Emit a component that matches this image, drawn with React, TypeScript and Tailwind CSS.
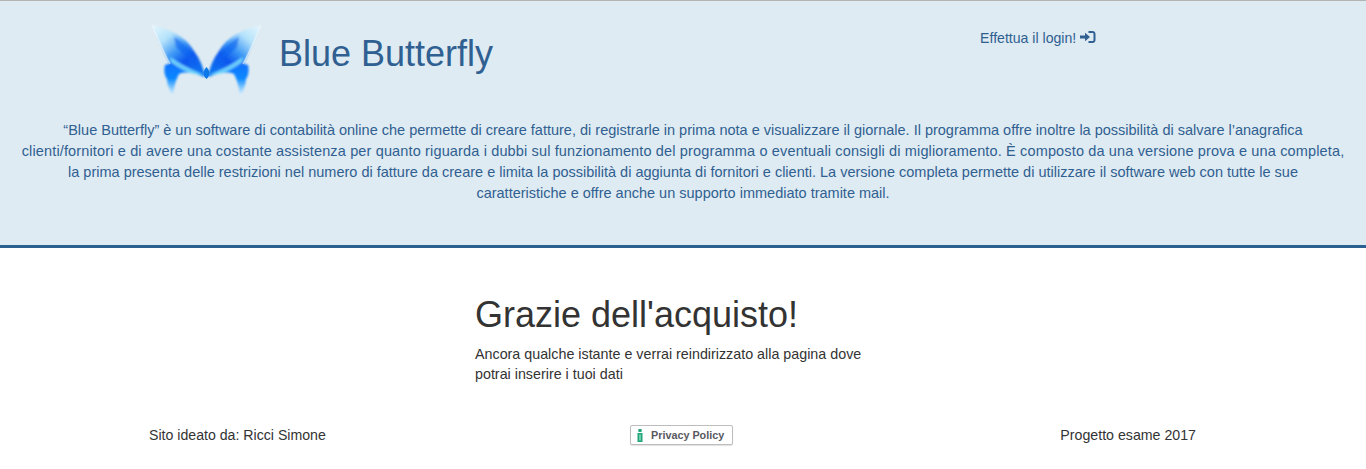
import React from 'react'

function ButterflyLogo() {
  return (
    <svg width="114" height="76" viewBox="0 0 114 76" className="shrink-0">
      <defs>
        <linearGradient id="wingL" x1="0" y1="0" x2="0.85" y2="0.95">
          <stop offset="0" stopColor="#e8f8ff" />
          <stop offset="0.3" stopColor="#b4e2fb" />
          <stop offset="0.55" stopColor="#3a96f5" />
          <stop offset="0.75" stopColor="#0a55ee" />
          <stop offset="1" stopColor="#0a78f0" />
        </linearGradient>
        <linearGradient id="wingR" x1="1" y1="0" x2="0.15" y2="0.95">
          <stop offset="0" stopColor="#e8f8ff" />
          <stop offset="0.3" stopColor="#b4e2fb" />
          <stop offset="0.55" stopColor="#3a96f5" />
          <stop offset="0.75" stopColor="#0a55ee" />
          <stop offset="1" stopColor="#0a78f0" />
        </linearGradient>
        <linearGradient id="lower" x1="0" y1="0" x2="0" y2="1">
          <stop offset="0" stopColor="#0a72ff" />
          <stop offset="0.45" stopColor="#0a88ff" />
          <stop offset="0.75" stopColor="#8fd0ff" />
          <stop offset="1" stopColor="#f0faff" />
        </linearGradient>
        <filter id="soft" x="-10%" y="-10%" width="120%" height="120%">
          <feGaussianBlur stdDeviation="1.1" />
        </filter>
      </defs>
      <g filter="url(#soft)">
        <path d="M15 42 C28 37 44 44 55 52 L54 54 C46 50 36 48 29 51 C25 58 24 66 23 74 C20 68 17 62 17 56 C14 52 14 46 15 42 Z" fill="url(#lower)" />
        <path d="M98 42 C85 37 69 44 58 52 L59 54 C67 50 77 48 84 51 C88 58 89 66 90 74 C93 68 96 62 96 56 C99 52 99 46 98 42 Z" fill="url(#lower)" />
        <path d="M2 2 C20 6 36 14 44 28 C50 36 53 44 55 52 C42 50 30 46 20 41 C14 30 8 16 2 2 Z" fill="url(#wingL)" />
        <path d="M111 2 C93 6 77 14 69 28 C63 36 60 44 58 52 C71 50 83 46 93 41 C99 30 105 16 111 2 Z" fill="url(#wingR)" />
        <path d="M24 14 C36 20 46 34 53 50 C44 42 34 32 26 24 Z" fill="#0a60f0" opacity="0.6" />
        <path d="M89 14 C77 20 67 34 60 50 C69 42 79 32 87 24 Z" fill="#0a60f0" opacity="0.6" />
        <path d="M20 34 C30 41 42 47 54 52 L44 51 C36 49 28 45 21 39 Z" fill="#7fe6ff" opacity="0.8" />
        <path d="M93 34 C83 41 71 47 59 52 L69 51 C77 49 85 45 92 39 Z" fill="#7fe6ff" opacity="0.8" />
      </g>
      <path d="M2 2 C8 16 14 30 20 41" fill="none" stroke="#f2fbff" strokeWidth="0.8" opacity="0.8" />
      <path d="M111 2 C105 16 99 30 93 41" fill="none" stroke="#f2fbff" strokeWidth="0.8" opacity="0.8" />
      <path d="M56.5 44 C60 48 61 52 56.5 56 C52 52 53 48 56.5 44 Z" fill="#0a78e8" />
    </svg>
  )
}

function SignInIcon() {
  return (
    <svg width="16" height="14" viewBox="0 0 16 14" fill="#2f6091" className="inline-block ml-1 align-[-1px]">
      <path d="M0 5.5 H5 V2.8 L10 7 L5 11.2 V8.5 H0 Z" />
      <path d="M8.5 1 H12.5 C14.2 1 15.5 2.3 15.5 4 V10 C15.5 11.7 14.2 13 12.5 13 H8.5 V11 H12.5 C13.1 11 13.5 10.6 13.5 10 V4 C13.5 3.4 13.1 3 12.5 3 H8.5 Z" />
    </svg>
  )
}

function PrivacyBadge() {
  return (
    <div className="flex items-center w-[103px] h-[20px] bg-white border border-[#bdbdbd] rounded-[2px] shadow-[0_1px_1px_rgba(0,0,0,0.12)] pl-[6px]">
      <svg width="6" height="13" viewBox="0 0 6 13" fill="#1fa67a" className="shrink-0">
        <rect x="1.2" y="0" width="3.6" height="3" rx="1.2" />
        <rect x="0.5" y="4" width="5" height="9" />
        <rect x="2.5" y="5.5" width="1" height="6" fill="#c9eee0" />
      </svg>
      <span className="ml-[8px] text-[10.8px] font-bold text-[#59595f] leading-none whitespace-nowrap">Privacy Policy</span>
    </div>
  )
}

export default function App() {
  return (
    <div className="font-['Liberation_Sans',Arial,sans-serif] text-[14px] leading-[20px] text-[#333] bg-white h-[469px] overflow-hidden">
      <header className="h-[248px] bg-[#dfebf2] border-t border-t-[#b3b3b3] border-b-[3px] border-b-[#2a6190] text-[#2f6091]">
        <div className="flex h-[99px] pt-[22px] pl-[150px]">
          <ButterflyLogo />
          <h1 className="ml-[15px] mt-[11px] text-[36px] leading-[40px] font-normal whitespace-nowrap">Blue Butterfly</h1>
          <p className="ml-[487px] mt-[5px] whitespace-nowrap text-[14.1px]">Effettua il login!<SignInIcon /></p>
        </div>
        <p className="mt-[20px] text-center text-[14.5px] leading-[21px] whitespace-nowrap">
          “Blue Butterfly” è un software di contabilità online che permette di creare fatture, di registrarle in prima nota e visualizzare il giornale. Il programma offre inoltre la possibilità di salvare l’anagrafica<br />
          <span className="tracking-[0.145px]">clienti/fornitori e di avere una costante assistenza per quanto riguarda i dubbi sul funzionamento del programma o eventuali consigli di miglioramento. È composto da una versione prova e una completa,</span><br />
          la prima presenta delle restrizioni nel numero di fatture da creare e limita la possibilità di aggiunta di fornitori e clienti. La versione completa permette di utilizzare il software web con tutte le sue<br />
          caratteristiche e offre anche un supporto immediato tramite mail.
        </p>
      </header>
      <main className="ml-[475px] w-[400px] pt-[47px]">
        <h2 className="text-[36px] leading-[40px] font-normal">Grazie dell'acquisto!</h2>
        <p className="mt-[9px] text-[14.3px]">Ancora qualche istante e verrai reindirizzato alla pagina dove potrai inserire i tuoi dati</p>
      </main>
      <footer className="flex items-center mt-[41px] pl-[149px] pr-[170px]">
        <span className="w-[481px] text-[14.15px]">Sito ideato da: Ricci Simone</span>
        <PrivacyBadge />
        <span className="ml-auto text-[14.2px]">Progetto esame 2017</span>
      </footer>
    </div>
  )
}
